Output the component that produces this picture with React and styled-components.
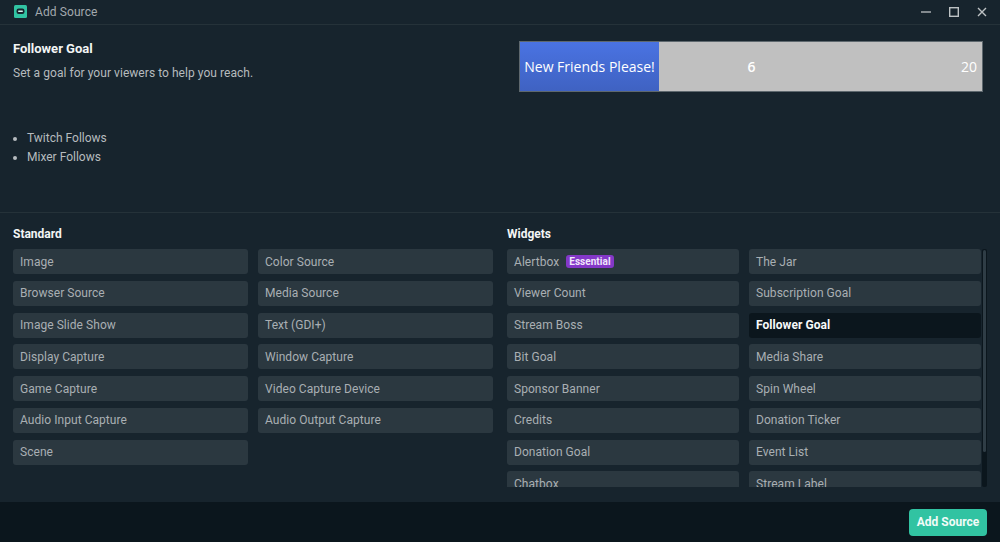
import React from 'react';
import styled, { createGlobalStyle } from 'styled-components';

const Global = createGlobalStyle`
  html, body { margin: 0; padding: 0; background: #17242d; }
  body { font-family: Roboto, "Liberation Sans", sans-serif; }
  * { box-sizing: border-box; }
`;

const Page = styled.div`
  width: 1000px;
  height: 542px;
  display: flex;
  flex-direction: column;
  overflow: hidden;
  background: #17242d;
  color: #bdc2c4;
  font-size: 12px;
`;

const TitleBar = styled.header`
  height: 25px;
  flex: none;
  display: flex;
  align-items: center;
  padding: 0 13px 1px 14px;
  border-bottom: 1px solid #253239;
`;

const AppIcon = styled.svg`
  width: 13px;
  height: 13px;
  margin-right: 8px;
`;

const WindowTitle = styled.div`
  flex: 1;
  color: #a3a9ad;
  font-size: 12px;
  letter-spacing: 0.1px;
`;

const WindowControls = styled.div`
  display: flex;
  align-items: center;
  gap: 18px;
  color: #bdc2c4;
`;

const Preview = styled.section`
  height: 188px;
  flex: none;
  display: flex;
  justify-content: space-between;
  padding: 16px 17px 0 13px;
  border-bottom: 1px solid #253239;
`;

const Info = styled.div`
  width: 400px;
`;

const InfoTitle = styled.h1`
  margin: 0;
  color: #f3f5f5;
  font-size: 13px;
  line-height: 15px;
  font-weight: 700;
`;

const InfoText = styled.p`
  margin: 10px 0 0;
  color: #b6bbbe;
  font-size: 12px;
  line-height: 15px;
  letter-spacing: 0.05px;
`;

const Bullets = styled.ul`
  margin: 48px 0 0;
  padding: 0 0 0 14px;
  color: #b6bbbe;
  font-size: 12px;
  line-height: 18.5px;
`;

const GoalBar = styled.div`
  width: 464px;
  height: 51px;
  display: flex;
  align-items: center;
  background: #c0c0c0;
  border: 1px solid #5e686e;
  color: #fff;
  font-family: "Open Sans", "Noto Sans", sans-serif;
  font-size: 14px;
`;

const GoalName = styled.div`
  width: 139px;
  height: 100%;
  display: flex;
  align-items: center;
  justify-content: center;
  background: linear-gradient(#4a73e2, #3f62c2);
  white-space: nowrap;
`;

const GoalCount = styled.div`
  flex: 1;
  text-align: center;
  padding-right: extra;
  padding-right: 14px;
  font-weight: 600;
`;

const GoalTotal = styled.div`
  flex: 1;
  text-align: right;
  padding-right: 5px;
`;

const GoalMiddle = styled.div`
  width: 185px;
  text-align: center;
  font-weight: 600;
`;

const Sources = styled.section`
  flex: 1;
  min-height: 0;
  display: flex;
  padding: 14px 13px 15px 13px;
  gap: 14px;
`;

const Group = styled.div`
  width: ${(p) => p.$width}px;
  flex: none;
  display: flex;
  flex-direction: column;
  min-height: 0;
`;

const GroupTitle = styled.h2`
  margin: 0 0 8px;
  height: 14px;
  color: #f3f5f5;
  font-size: 12px;
  line-height: 14px;
  font-weight: 700;
`;

const ScrollArea = styled.div`
  position: relative;
  flex: 1;
  min-height: 0;
  overflow: hidden;
  padding-right: 6px;
`;

const ScrollBar = styled.div`
  position: absolute;
  top: 0;
  right: 0;
  bottom: 0;
  width: 5px;
  background: #0b161d;
  border-radius: 2px;

  &::after {
    content: '';
    position: absolute;
    top: 1px;
    left: 1px;
    width: 3px;
    height: 202px;
    background: #2f3d46;
    border-radius: 2px;
  }
`;

const Grid = styled.div`
  display: grid;
  grid-template-columns: ${(p) => p.$col}px ${(p) => p.$col}px;
  grid-auto-rows: 25px;
  column-gap: 10px;
  row-gap: 6.75px;
`;

const Item = styled.div`
  display: flex;
  align-items: center;
  padding: 0 7px;
  border-radius: 3px;
  background: ${(p) => (p.$active ? '#0b161d' : '#2b3840')};
  color: ${(p) => (p.$active ? '#f7f9f9' : '#a9afb3')};
  font-weight: ${(p) => (p.$active ? 700 : 400)};
  font-size: 12px;
  letter-spacing: 0.05px;
  white-space: nowrap;
`;

const Badge = styled.span`
  margin-left: 7px;
  height: 13px;
  padding: 0 3px;
  display: inline-flex;
  align-items: center;
  border-radius: 3px;
  background: #8438c8;
  color: #f0e6fa;
  font-size: 10px;
  font-weight: 700;
`;

const Footer = styled.footer`
  height: 40px;
  flex: none;
  display: flex;
  align-items: center;
  justify-content: flex-end;
  padding: 0 13px;
  background: #0b161d;
`;

const AddButton = styled.button`
  width: 78px;
  height: 27px;
  border: 0;
  padding: 0;
  border-radius: 4px;
  background: #31c3a2;
  color: #f2fbf8;
  font-family: inherit;
  font-size: 12px;
  font-weight: 700;
`;

const standard = [
  'Image', 'Color Source',
  'Browser Source', 'Media Source',
  'Image Slide Show', 'Text (GDI+)',
  'Display Capture', 'Window Capture',
  'Game Capture', 'Video Capture Device',
  'Audio Input Capture', 'Audio Output Capture',
  'Scene',
];

const widgets = [
  'Alertbox', 'The Jar',
  'Viewer Count', 'Subscription Goal',
  'Stream Boss', 'Follower Goal',
  'Bit Goal', 'Media Share',
  'Sponsor Banner', 'Spin Wheel',
  'Credits', 'Donation Ticker',
  'Donation Goal', 'Event List',
  'Chatbox', 'Stream Label',
];

export default function App() {
  return (
    <Page>
      <Global />
      <TitleBar>
        <AppIcon viewBox="0 0 13 13">
          <rect width="13" height="13" rx="1.5" fill="#31c3a2" />
          <rect x="2.5" y="3.5" width="8" height="5.5" rx="2.2" fill="#17242d" />
          <rect x="4" y="5.4" width="5" height="1.6" rx="0.8" fill="#d5f3ec" />
        </AppIcon>
        <WindowTitle>Add Source</WindowTitle>
        <WindowControls>
          <svg width="10" height="10" viewBox="0 0 10 10">
            <path d="M0 5h10" stroke="currentColor" strokeWidth="1.3" />
          </svg>
          <svg width="10" height="10" viewBox="0 0 10 10" fill="none">
            <rect x="0.7" y="0.7" width="8.6" height="8.6" stroke="currentColor" strokeWidth="1.4" />
          </svg>
          <svg width="10" height="10" viewBox="0 0 10 10">
            <path d="M1 1l8 8M9 1l-8 8" stroke="currentColor" strokeWidth="1.4" />
          </svg>
        </WindowControls>
      </TitleBar>
      <Preview>
        <Info>
          <InfoTitle>Follower Goal</InfoTitle>
          <InfoText>Set a goal for your viewers to help you reach.</InfoText>
          <Bullets>
            <li>Twitch Follows</li>
            <li>Mixer Follows</li>
          </Bullets>
        </Info>
        <GoalBar>
          <GoalName>New Friends Please!</GoalName>
          <GoalMiddle>6</GoalMiddle>
          <GoalTotal>20</GoalTotal>
        </GoalBar>
      </Preview>
      <Sources>
        <Group $width={480}>
          <GroupTitle>Standard</GroupTitle>
          <Grid $col={235}>
            {standard.map((name) => (
              <Item key={name}>{name}</Item>
            ))}
          </Grid>
        </Group>
        <Group $width={480}>
          <GroupTitle>Widgets</GroupTitle>
          <ScrollArea>
            <Grid $col={232}>
              {widgets.map((name) => (
                <Item key={name} $active={name === 'Follower Goal'}>
                  {name}
                  {name === 'Alertbox' && <Badge>Essential</Badge>}
                </Item>
              ))}
            </Grid>
            <ScrollBar />
          </ScrollArea>
        </Group>
      </Sources>
      <Footer>
        <AddButton>Add Source</AddButton>
      </Footer>
    </Page>
  );
}
